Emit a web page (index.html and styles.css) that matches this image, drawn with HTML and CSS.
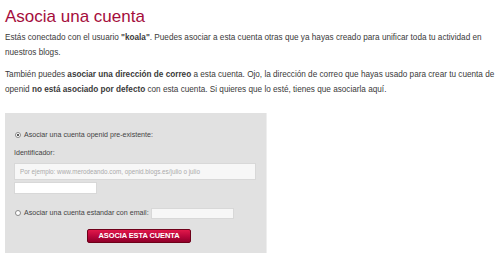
FILE: index.html
```html
<!DOCTYPE html>
<html lang="es">
<head>
<meta charset="utf-8">
<link rel="stylesheet" href="styles.css">
</head>
<body>
<div class="page">
  <h1 class="title">Asocia una cuenta</h1>
  <p class="text">Estás conectado con el usuario <b>"koala"</b>. Puedes asociar a esta cuenta otras que ya hayas creado para unificar toda tu actividad en nuestros blogs.</p>
  <p class="text">También puedes <b>asociar una dirección de correo</b> a esta cuenta. Ojo, la dirección de correo que hayas usado para crear tu cuenta de openid <b>no está asociado por defecto</b> con esta cuenta. Si quieres que lo esté, tienes que asociarla aquí.</p>
  <form class="box">
    <label class="option"><span class="radio checked"></span>Asociar una cuenta openid pre-existente:</label>
    <div class="field-label">Identificador:</div>
    <div class="input wide">Por ejemplo: www.merodeando.com, openid.blogs.es/julio o julio</div>
    <div class="input small"></div>
    <label class="option email"><span class="radio"></span>Asociar una cuenta estandar con email:<span class="input mail"></span></label>
    <div class="actions"><span class="button">ASOCIA ESTA CUENTA</span></div>
  </form>
</div>
</body>
</html>
```
FILE: styles.css
```css
* { box-sizing: border-box; }
html, body { margin: 0; padding: 0; background: #fff; }
body { font-family: "Liberation Sans", Arial, sans-serif; color: #333; }
.page { padding: 5px 0 0 5px; width: 500px; }
.title {
  margin: 0;
  font-size: 17px;
  font-weight: normal;
  color: #a50d3c;
  line-height: 21px;
  height: 21px;
  padding-top: 1px;
}
.text {
  margin: 4px 0 0 0;
  font-size: 8.2px;
  line-height: 15px;
  color: #3a3a3a;
  width: 494px;
}
.text + .text { margin-top: 7px; }
.box {
  margin-top: 16px;
  width: 262px;
  height: 140px;
  background: #e1e1e1;
  border-right: 1px solid #eeeeee;
  padding: 16px 0 0 9px;
  font-size: 7.1px;
  color: #444;
}
.option { display: flex; align-items: center; height: 12px; line-height: 12px; margin-left: 1px; }
.radio {
  width: 6px; height: 6px; border-radius: 50%;
  background: #fff; border: 1px solid #888;
  margin-right: 3px; position: relative; flex: none;
}
.radio.checked::after {
  content: ""; position: absolute; left: 1px; top: 1px;
  width: 2px; height: 2px; border-radius: 50%; background: #222;
}
.field-label { margin-top: 6px; height: 12px; line-height: 12px; }
.input { background: #f7f7f7; border: 1px solid #d8d8d8; }
.wide {
  margin-top: 4px; width: 242px; height: 17px;
  line-height: 15px; padding-left: 5px; color: #aaa; font-size: 6.3px;
}
.small { margin-top: 2px; width: 83px; height: 12px; background: #fff; }
.email { margin-top: 13px; }
.mail { width: 83px; height: 11px; margin-left: 2px; }
.actions { display: flex; margin-top: 10px; padding-left: 73px; }
.button {
  display: block; width: 104px; height: 14px;
  background: linear-gradient(#e0184a, #b8053a 55%, #90002a);
  border: 1px solid #6e0019; border-radius: 2px;
  color: #fff; font-weight: bold; font-size: 7.5px; line-height: 12px; text-align: center;
  letter-spacing: -0.1px;
}
```
